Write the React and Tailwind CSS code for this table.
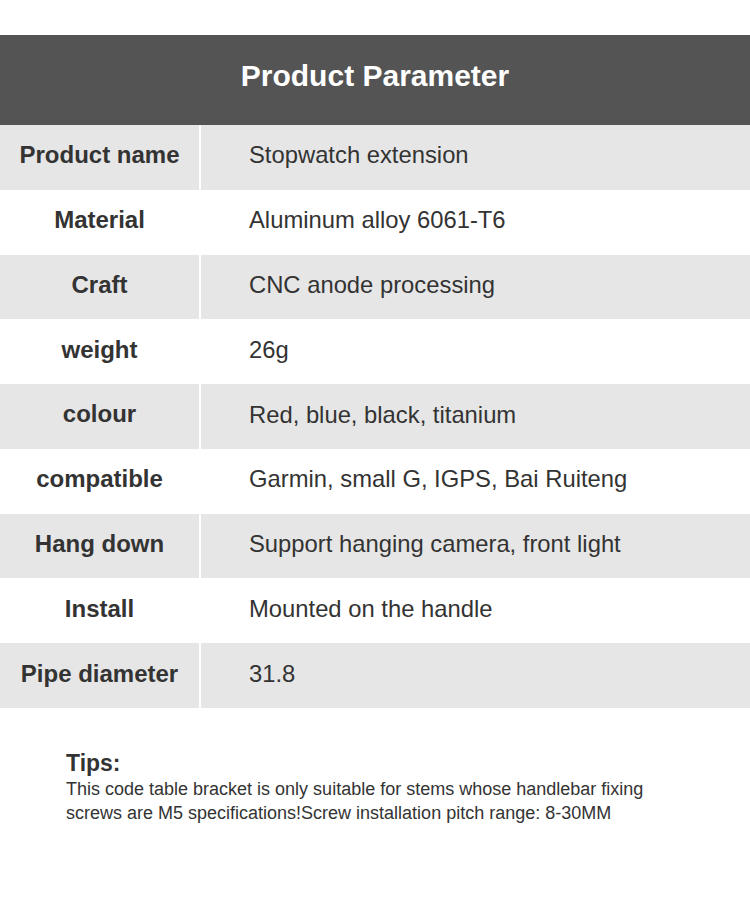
const ROWS = [
  ["Product name", "Stopwatch extension"],
  ["Material", "Aluminum alloy 6061-T6"],
  ["Craft", "CNC anode processing"],
  ["weight", "26g"],
  ["colour", "Red, blue, black, titanium"],
  ["compatible", "Garmin, small G, IGPS, Bai Ruiteng"],
  ["Hang down", "Support hanging camera, front light"],
  ["Install", "Mounted on the handle"],
  ["Pipe diameter", "31.8"],
];

export default function App() {
  return (
    <div className="w-[750px] h-[911px] bg-white font-['Liberation_Sans',Arial,sans-serif] text-[#333]">
      <div className="h-[35px]" />
      <div className="h-[90px] bg-[#545454] flex items-center justify-center pb-2">
        <h1 className="text-white font-bold text-[30px] leading-none">Product Parameter</h1>
      </div>

      <div className="flex flex-col">
        {ROWS.map(([label, value], i) => (
          <div
            key={label}
            className={`h-[64.78px] flex ${i % 2 === 0 ? "bg-[#e6e6e6]" : "bg-white"}`}
          >
            <div className="w-[199px] flex items-center justify-center pb-1 font-bold text-[24px] leading-none">
              {label}
            </div>
            <div className="w-[2px] bg-white" />
            <div className="flex-1 flex items-center pl-[48px] pb-1 text-[23.8px] leading-none">
              {value}
            </div>
          </div>
        ))}
      </div>

      <div className="pl-[66px] pt-[41px]">
        <div className="font-bold text-[23px] leading-[28px]">Tips:</div>
        <p className="w-[590px] text-[18px] leading-[24px]">
          This code table bracket is only suitable for stems whose handlebar fixing screws are M5
          specifications!Screw installation pitch range: 8-30MM
        </p>
      </div>
    </div>
  );
}
